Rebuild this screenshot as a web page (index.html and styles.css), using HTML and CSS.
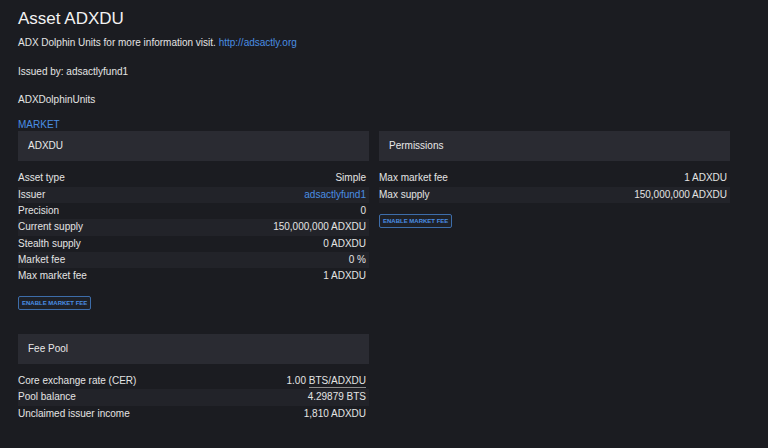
FILE: index.html
```html
<!DOCTYPE html>
<html lang="en">
<head>
    <meta charset="UTF-8">
    <title>Asset ADXDU</title>
    <link rel="stylesheet" href="styles.css">
</head>
<body>
    <div class="page">
        <h1 class="title">Asset ADXDU</h1>
        <p class="text">ADX Dolphin Units for more information visit. <a class="link" href="#">http://adsactly.org</a></p>
        <p class="text">Issued by: adsactlyfund1</p>
        <p class="text">ADXDolphinUnits</p>
        <a class="market" href="#">MARKET</a>

        <div class="columns">
            <div class="column">
                <div class="panel-header">ADXDU</div>
                <div class="info">
                    <div class="row"><span>Asset type</span><span>Simple</span></div>
                    <div class="row"><span>Issuer</span><a class="link" href="#">adsactlyfund1</a></div>
                    <div class="row"><span>Precision</span><span>0</span></div>
                    <div class="row"><span>Current supply</span><span>150,000,000 ADXDU</span></div>
                    <div class="row"><span>Stealth supply</span><span>0 ADXDU</span></div>
                    <div class="row"><span>Market fee</span><span>0 %</span></div>
                    <div class="row"><span>Max market fee</span><span>1 ADXDU</span></div>
                </div>
                <button class="small-button">ENABLE MARKET FEE</button>

                <div class="panel-header fee-pool">Fee Pool</div>
                <div class="info">
                    <div class="row"><span>Core exchange rate (CER)</span><span>1.00 <span class="underline">BTS/ADXDU</span></span></div>
                    <div class="row"><span>Pool balance</span><span>4.29879 BTS</span></div>
                    <div class="row"><span>Unclaimed issuer income</span><span>1,810 ADXDU</span></div>
                </div>
            </div>
            <div class="column">
                <div class="panel-header">Permissions</div>
                <div class="info">
                    <div class="row"><span>Max market fee</span><span>1 ADXDU</span></div>
                    <div class="row"><span>Max supply</span><span>150,000,000 ADXDU</span></div>
                </div>
                <button class="small-button">ENABLE MARKET FEE</button>
            </div>
        </div>
    </div>
</body>
</html>
```

FILE: styles.css
```css
body {
    margin: 0;
    background-color: #1b1c21;
    color: #e4e4e4;
    font-family: "Liberation Sans", Arial, sans-serif;
    font-size: 10px;
}
.page {
    padding: 9px 18px 0 18px;
}
.title {
    margin: 0 0 7px 0;
    font-size: 17px;
    font-weight: normal;
    line-height: 20px;
    color: #f2f2f2;
}
.text {
    margin: 0 0 14.5px 0;
    line-height: 14px;
}
.link {
    color: #4a8ee3;
    text-decoration: none;
}
.market {
    display: block;
    margin-top: -2.5px;
    line-height: 12px;
    color: #4a8ee3;
    text-decoration: none;
}
.columns {
    display: flex;
    gap: 10px;
}
.column {
    width: 351px;
}
.panel-header {
    height: 30px;
    line-height: 30px;
    padding-left: 10px;
    background-color: #2a2b32;
    color: #e8e8e8;
}
.fee-pool {
    margin-top: 24px;
}
.info {
    margin-top: 9.4px;
}
.row {
    display: flex;
    justify-content: space-between;
    height: 16.33px;
    line-height: 16.33px;
    padding-right: 3px;
    white-space: nowrap;
}
.row:nth-child(even) {
    background-color: #222329;
}
.underline {
    border-bottom: 1px solid #8a8a8a;
    padding-bottom: 1px;
}
.small-button {
    display: block;
    margin-top: 11px;
    height: 14px;
    padding: 0 3px;
    border: 1px solid #3d6daa;
    border-radius: 2px;
    background-color: #1e2128;
    color: #4a8ee3;
    font-family: "Liberation Sans", Arial, sans-serif;
    font-size: 6px;
    font-weight: bold;
    line-height: 12px;
    cursor: pointer;
}
```
